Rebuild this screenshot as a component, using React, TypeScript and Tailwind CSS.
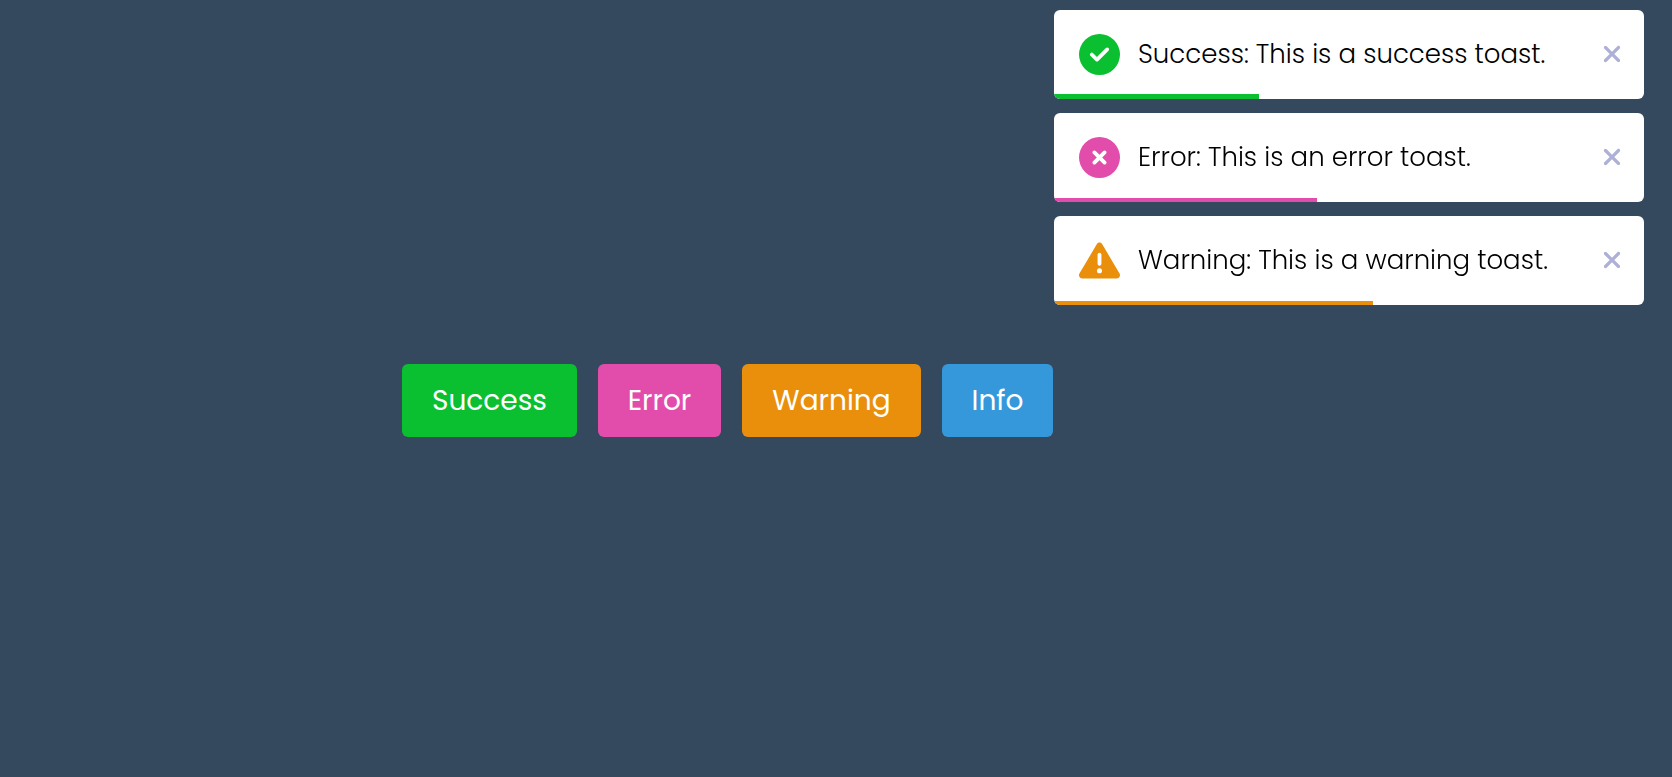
import { useState } from "react";
import type { IconType } from "react-icons";
import {
  FaCircleCheck,
  FaCircleXmark,
  FaTriangleExclamation,
  FaXmark,
} from "react-icons/fa6";

type Toast = {
  id: string;
  text: string;
  icon: IconType;
  iconClass: string;
  barClass: string;
  progress: number;
};

const initialToasts: Toast[] = [
  {
    id: "success",
    text: "Success: This is a success toast.",
    icon: FaCircleCheck,
    iconClass: "text-[#0abf30]",
    barClass: "h-[5px] bg-[#0abf30]",
    progress: 34.7,
  },
  {
    id: "error",
    text: "Error: This is an error toast.",
    icon: FaCircleXmark,
    iconClass: "text-[#e24dab]",
    barClass: "h-1 bg-[#e24dab]",
    progress: 44.6,
  },
  {
    id: "warning",
    text: "Warning: This is a warning toast.",
    icon: FaTriangleExclamation,
    iconClass: "text-[#e98f0c]",
    barClass: "h-1 bg-[#e98f0c]",
    progress: 54.1,
  },
];

const buttons = [
  { label: "Success", className: "w-[175px] bg-[#0abf30]" },
  { label: "Error", className: "w-[123px] bg-[#e24dab]" },
  { label: "Warning", className: "w-[179px] bg-[#e98f0c]" },
  { label: "Info", className: "w-[111px] bg-[#3498db]" },
];

function ToastItem({ toast, onClose }: { toast: Toast; onClose: () => void }) {
  const Icon = toast.icon;
  return (
    <li className="relative flex h-[89px] items-center justify-between overflow-hidden rounded-md bg-white pr-[22px] pl-[25px]">
      <div className="flex items-center gap-[18px]">
        <Icon aria-hidden="true" className={`size-[41px] shrink-0 ${toast.iconClass}`} />
        <span className="text-[26px] font-light whitespace-nowrap text-black">{toast.text}</span>
      </div>
      <button type="button" aria-label="Close" onClick={onClose} className="cursor-pointer pb-0.5 text-[#aeb0d7]">
        <FaXmark aria-hidden="true" className="h-[26px] w-5" />
      </button>
      <div
        className={`absolute bottom-0 left-0 ${toast.barClass}`}
        style={{ width: `${toast.progress}%` }}
      />
    </li>
  );
}

export default function App() {
  const [toasts, setToasts] = useState(initialToasts);

  return (
    <div className="min-h-screen overflow-hidden bg-[#34495e] font-['Poppins','Inter',sans-serif]">
      <ul className="fixed top-2.5 right-7 flex w-[590px] max-w-full flex-col gap-3.5">
        {toasts.map((toast) => (
          <ToastItem
            key={toast.id}
            toast={toast}
            onClose={() => setToasts((all) => all.filter((t) => t.id !== toast.id))}
          />
        ))}
      </ul>
      <main className="flex min-h-screen items-center justify-center gap-[21px] pt-6 pr-[217px]">
        {buttons.map((button) => (
          <button
            key={button.label}
            type="button"
            className={`h-[73px] shrink-0 cursor-pointer rounded-md text-[28px] text-white ${button.className}`}
          >
            {button.label}
          </button>
        ))}
      </main>
    </div>
  );
}
